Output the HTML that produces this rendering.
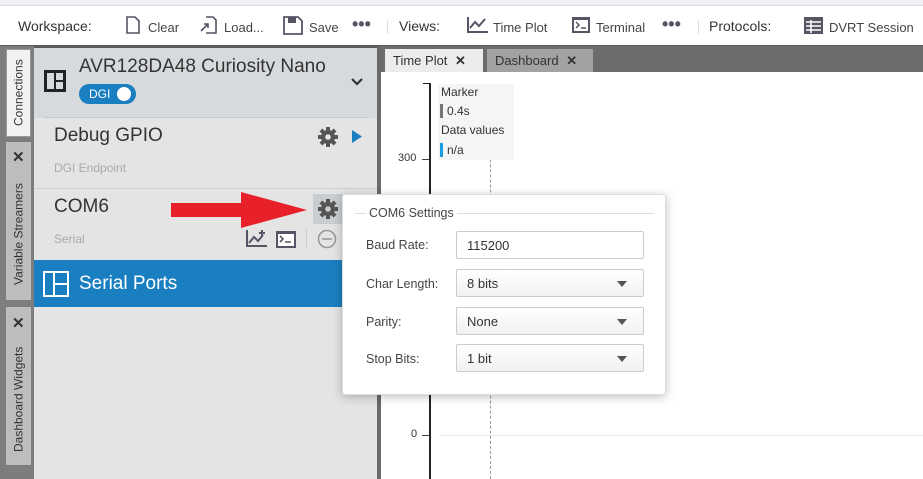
<!DOCTYPE html>
<html><head><style>
*{margin:0;padding:0;box-sizing:border-box}
body{width:923px;height:479px;position:relative;overflow:hidden;font-family:"Liberation Sans",sans-serif;background:#fff;color:#333}
.a{position:absolute}
.t{font-size:13px;color:#444;white-space:nowrap}
.vt{position:absolute;writing-mode:vertical-rl;transform:rotate(180deg);font-size:12px;color:#333;white-space:nowrap;display:flex;align-items:center;justify-content:center}
.in{position:absolute;left:456px;width:188px;height:28px;border:1px solid #ccc;border-radius:2px;background:#fff;font-size:13px;padding:6px 10px;color:#333}
.sel{background:linear-gradient(#fff,#f1f1f1)}
.sel:after{content:"";position:absolute;right:16px;top:11px;border-left:5px solid transparent;border-right:5px solid transparent;border-top:6px solid #555}
.lb{position:absolute;left:366px;font-size:12.5px;color:#444}
.dots{position:absolute;font-size:18px;font-weight:bold;color:#556;letter-spacing:0px}
</style></head><body>
<svg width="0" height="0" style="position:absolute"><defs>
<g id="gear"><g fill="#555">
<rect x="8" y="0" width="4" height="20"/><rect x="8" y="0" width="4" height="20" transform="rotate(45 10 10)"/>
<rect x="8" y="0" width="4" height="20" transform="rotate(90 10 10)"/><rect x="8" y="0" width="4" height="20" transform="rotate(135 10 10)"/>
<circle cx="10" cy="10" r="7"/></g><circle cx="10" cy="10" r="2.8" fill="#e4e4e4"/></g>
</defs></svg>
<!-- top strip -->
<div class="a" style="left:0;top:0;width:923px;height:6px;background:#eef0f3;border-bottom:1px solid #e0e0e0"></div>
<div class="a" style="left:0;top:6px;width:923px;height:39px;background:#fff"></div>
<div class="a t" style="left:18px;top:18px;font-size:14px;color:#333">Workspace:</div>
<svg class="a" style="left:125px;top:16px" width="16" height="18"><path d="M2 1h8l4 4v12H2z" fill="none" stroke="#556" stroke-width="1.6"/></svg>
<div class="a t" style="left:148px;top:20px">Clear</div>
<svg class="a" style="left:200px;top:16px" width="18" height="18"><path d="M6 1h7l3 3v13H6" fill="none" stroke="#556" stroke-width="1.6"/><path d="M1 15l7-7M4 8h4v4" fill="none" stroke="#556" stroke-width="1.6"/></svg>
<div class="a t" style="left:224px;top:20px">Load...</div>
<svg class="a" style="left:283px;top:16px" width="20" height="19"><path d="M1 1h14l4 4v13H1z" fill="none" stroke="#556" stroke-width="1.8"/><rect x="5" y="1" width="8" height="6" fill="#556"/></svg>
<div class="a t" style="left:309px;top:20px">Save</div>
<div class="dots" style="left:352px;top:14px">•••</div>
<div class="a" style="left:387px;top:20px;width:1px;height:14px;background:#ddd"></div>
<div class="a t" style="left:399px;top:18px;font-size:14px;color:#333">Views:</div>
<svg class="a" style="left:467px;top:16px" width="22" height="18"><path d="M1 1v15h20M3 12l5-6 4 4 6-7" fill="none" stroke="#556" stroke-width="2"/></svg>
<div class="a t" style="left:493px;top:20px">Time Plot</div>
<svg class="a" style="left:571px;top:16px" width="20" height="18"><rect x="1" y="1" width="18" height="16" fill="#556"/><rect x="3" y="4" width="14" height="11" fill="#fff"/><path d="M5 6l3 3-3 3M10 12h5" fill="none" stroke="#556" stroke-width="1.5"/></svg>
<div class="a t" style="left:596px;top:20px">Terminal</div>
<div class="dots" style="left:662px;top:14px">•••</div>
<div class="a" style="left:698px;top:20px;width:1px;height:14px;background:#ddd"></div>
<div class="a t" style="left:709px;top:18px;font-size:14px;color:#333">Protocols:</div>
<svg class="a" style="left:803px;top:16px" width="21" height="19"><rect x="1" y="1" width="19" height="17" fill="#556"/><path d="M3 6h15M3 10h15M3 14h15M8 4v13" stroke="#fff" stroke-width="1.5"/></svg>
<div class="a t" style="left:829px;top:20px">DVRT Session</div>
<div class="a" style="left:0;top:45px;width:923px;height:3px;background:#5a5a5a"></div>
<div class="a" style="left:0;top:46px;width:34px;height:433px;background:#7d7d7d"></div>
<div class="vt" style="left:6px;top:49px;width:25px;height:88px;background:#f2f2f2;border:1px solid #999">Connections</div>
<div class="a" style="left:6px;top:142px;width:25px;height:158px;background:#bdbdbd"></div>
<div class="a" style="left:12px;top:148px;font-size:15px;font-weight:bold;color:#333">✕</div>
<div class="vt" style="left:6px;top:172px;width:25px;height:125px">Variable Streamers</div>
<div class="a" style="left:6px;top:307px;width:25px;height:158px;background:#bdbdbd"></div>
<div class="a" style="left:12px;top:314px;font-size:15px;font-weight:bold;color:#333">✕</div>
<div class="vt" style="left:6px;top:336px;width:25px;height:126px">Dashboard Widgets</div>
<div class="a" style="left:34px;top:48px;width:344px;height:431px;background:#e4e4e4"></div>
<div class="a" style="left:34px;top:48px;width:344px;height:70px;background:#d7dadd"></div>
<svg class="a" style="left:43px;top:69px" width="24" height="24"><rect x="1" y="1" width="22" height="22" fill="#222"/><rect x="4" y="4" width="7" height="16" fill="#d7dadd"/><rect x="13" y="4" width="7" height="7" fill="#d7dadd"/><rect x="13" y="13" width="7" height="7" fill="#d7dadd"/></svg>
<div class="a" style="left:79px;top:56px;font-size:19px;color:#333">AVR128DA48 Curiosity Nano</div>
<div class="a" style="left:79px;top:84px;width:57px;height:20px;border-radius:10px;background:#1a7fc1"></div>
<div class="a" style="left:89px;top:87px;font-size:12px;color:#fff">DGI</div>
<div class="a" style="left:117px;top:87px;width:14px;height:14px;border-radius:7px;background:#fff"></div>
<svg class="a" style="left:350px;top:77px" width="14" height="9"><path d="M2 2l5 5 5-5" fill="none" stroke="#333" stroke-width="2.2"/></svg>
<div class="a" style="left:44px;top:117px;width:323px;height:1px;background:#c8c8c8"></div>
<div class="a" style="left:54px;top:125px;font-size:19px;color:#333">Debug GPIO</div>
<div class="a" style="left:54px;top:161px;font-size:12px;color:#aaa">DGI Endpoint</div>
<svg class="a" style="left:318px;top:127px" width="20" height="20"><use href="#gear"/></svg>
<svg class="a" style="left:352px;top:130px" width="10" height="13"><path d="M0 0l10 6.5L0 13z" fill="#1a7fc1"/></svg>
<div class="a" style="left:34px;top:188px;width:344px;height:1px;background:#cfcfcf"></div>
<div class="a" style="left:54px;top:196px;font-size:19px;color:#333">COM6</div>
<div class="a" style="left:54px;top:232px;font-size:12px;color:#aaa">Serial</div>
<div class="a" style="left:313px;top:194px;width:30px;height:30px;background:#c9ccd0"></div>
<svg class="a" style="left:318px;top:199px" width="20" height="20"><g fill="#555">
<rect x="8" y="0" width="4" height="20"/><rect x="8" y="0" width="4" height="20" transform="rotate(45 10 10)"/>
<rect x="8" y="0" width="4" height="20" transform="rotate(90 10 10)"/><rect x="8" y="0" width="4" height="20" transform="rotate(135 10 10)"/>
<circle cx="10" cy="10" r="7"/></g><circle cx="10" cy="10" r="2.8" fill="#c9ccd0"/></svg>
<svg class="a" style="left:170px;top:191px" width="138" height="38"><path d="M1 12h70V1l66 18-66 18V26H1z" fill="#e8202a"/></svg>
<svg class="a" style="left:246px;top:229px" width="22" height="19"><path d="M1 1v16h20M3 14l5-6 4 4 5-6M16 1v6M13 4h6" fill="none" stroke="#556" stroke-width="2"/></svg>
<svg class="a" style="left:276px;top:231px" width="20" height="17"><rect x="0" y="0" width="20" height="17" fill="#556"/><rect x="2" y="3" width="16" height="12" fill="#fff"/><path d="M4 5l3 3-3 3M9 11h6" fill="none" stroke="#556" stroke-width="1.6"/></svg>
<div class="a" style="left:306px;top:229px;width:1px;height:20px;background:#ccc"></div>
<svg class="a" style="left:317px;top:229px" width="20" height="20"><circle cx="10" cy="10" r="8.5" fill="none" stroke="#999" stroke-width="1.6"/><path d="M5 10h10" stroke="#999" stroke-width="1.6"/></svg>
<div class="a" style="left:34px;top:260px;width:344px;height:47px;background:#1a7fc1"></div>
<svg class="a" style="left:43px;top:271px" width="26" height="26"><rect x="1" y="1" width="24" height="24" fill="none" stroke="#fff" stroke-width="2"/><path d="M11 1v24M11 13h14" stroke="#fff" stroke-width="2"/></svg>
<div class="a" style="left:79px;top:273px;font-size:19px;color:#fff">Serial Ports</div>
<div class="a" style="left:377px;top:46px;width:4px;height:433px;background:#6a6a6a"></div>
<div class="a" style="left:381px;top:46px;width:542px;height:26px;background:#6c6c6c"></div>
<div class="a" style="left:385px;top:49px;width:98px;height:23px;background:#ececec;font-size:13px;color:#333;padding:4px 8px">Time Plot <b style="margin-left:4px">✕</b></div>
<div class="a" style="left:487px;top:49px;width:106px;height:23px;background:#a2a2a2;font-size:13px;color:#333;padding:4px 8px">Dashboard <b style="margin-left:4px">✕</b></div>
<div class="a" style="left:381px;top:72px;width:542px;height:407px;background:#fff"></div>
<div class="a" style="left:429px;top:83px;width:2px;height:396px;background:#222"></div>
<div class="a" style="left:423px;top:83px;width:7px;height:1px;background:#222"></div>
<div class="a" style="left:398px;top:152px;font-size:11px;color:#333">300</div>
<div class="a" style="left:422px;top:159px;width:7px;height:1px;background:#444"></div>
<div class="a" style="left:411px;top:428px;font-size:11px;color:#333">0</div>
<div class="a" style="left:422px;top:435px;width:7px;height:1px;background:#444"></div>
<div class="a" style="left:440px;top:435px;width:483px;height:1px;background:#e6e6e6"></div>
<div class="a" style="left:490px;top:84px;width:0;height:395px;border-left:1px dashed #999"></div>
<div class="a" style="left:438px;top:84px;width:76px;height:76px;background:#f5f5f5"></div>
<div class="a" style="left:441px;top:85px;font-size:12px;color:#333">Marker</div>
<div class="a" style="left:440px;top:104px;width:3px;height:14px;background:#777"></div>
<div class="a" style="left:447px;top:104px;font-size:12px;color:#333">0.4s</div>
<div class="a" style="left:441px;top:123px;font-size:12px;color:#333">Data values</div>
<div class="a" style="left:440px;top:143px;width:3px;height:14px;background:#1a9ee0"></div>
<div class="a" style="left:447px;top:143px;font-size:12px;color:#333">n/a</div>
<div class="a" style="left:342px;top:194px;width:324px;height:201px;background:#fff;border:1px solid #ddd;border-radius:3px;box-shadow:0 2px 10px rgba(0,0,0,.25)"></div>
<div class="a" style="left:355px;top:213px;width:299px;height:1px;background:#ddd"></div>
<div class="a" style="left:366px;top:206px;font-size:12.5px;color:#444;background:#fff;padding:0 3px">COM6 Settings</div>
<div class="lb" style="top:238px">Baud Rate:</div>
<div class="in" style="top:231px">115200</div>
<div class="lb" style="top:277px">Char Length:</div>
<div class="in sel" style="top:269px">8 bits</div>
<div class="lb" style="top:315px">Parity:</div>
<div class="in sel" style="top:307px">None</div>
<div class="lb" style="top:352px">Stop Bits:</div>
<div class="in sel" style="top:344px">1 bit</div>
</body></html>
